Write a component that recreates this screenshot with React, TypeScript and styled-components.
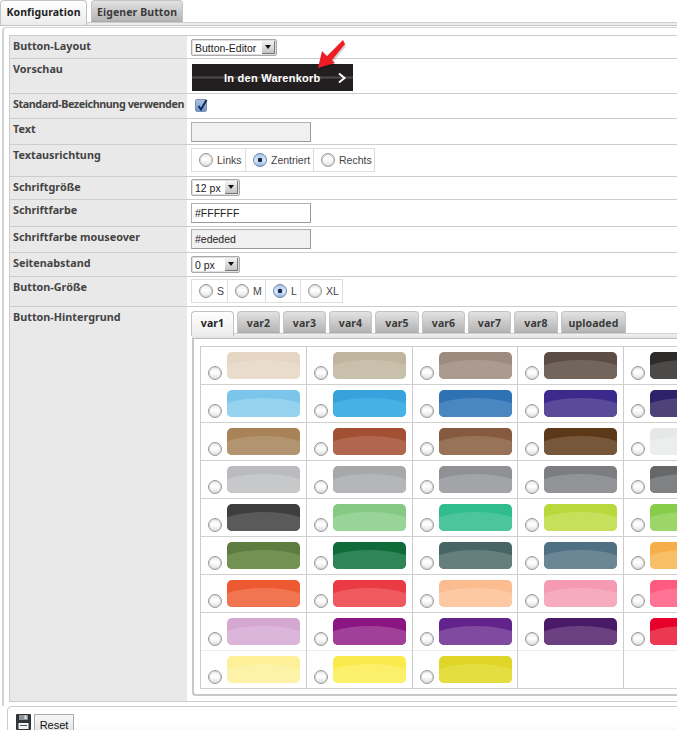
import styled, { createGlobalStyle } from 'styled-components';

const GlobalStyle = createGlobalStyle`
    html, body {
        margin: 0;
        padding: 0;
        background: #fff;
    }
    body {
        font-family: "Liberation Sans", Arial, sans-serif;
        font-size: 11px;
        color: #222;
    }
`;

const Page = styled.div`
    position: relative;
    width: 677px;
    height: 730px;
    overflow: hidden;
`;

const TabBar = styled.div<{ $inner?: boolean }>`
    display: flex;
    gap: ${({ $inner }) => ($inner ? '3px' : '4px')};
    height: 22px;
    position: relative;
    z-index: 1;
`;

const Tab = styled.div<{ $active?: boolean; $w: number }>`
    box-sizing: border-box;
    width: ${({ $w }) => $w}px;
    height: ${({ $active }) => ($active ? '25px' : '22px')};
    border: 1px solid #c4c4c4;
    border-bottom: ${({ $active }) => ($active ? 'none' : '1px solid #aaa')};
    border-radius: 4px 4px 0 0;
    background: ${({ $active }) =>
        $active ? 'linear-gradient(#ffffff, #ececec)' : 'linear-gradient(#e2e2e2, #b4b4b4)'};
    color: ${({ $active }) => ($active ? '#222' : '#3a3a3a')};
    font-family: "Noto Sans", sans-serif;
    font-weight: bold;
    font-size: 10.5px;
    letter-spacing: 0.1px;
    line-height: 22px;
    text-align: center;
`;

const TabRule = styled.div`
    height: 2px;
    background: #ececec;
    border-top: 1px solid #cfcfcf;
    border-bottom: 1px solid #c4c4c4;
`;

const Panel = styled.div`
    margin: 1px 0 0 2px;
    padding: 7px 0 4px 5px;
    width: 800px;
    border-left: 2px solid #d4d4d4;
    border-top: 1px solid #d4d4d4;
    border-top-left-radius: 4px;
`;

const FormTable = styled.div`
    border-top: 1px solid #ccc;
    border-left: 1px solid #ccc;
`;

const Row = styled.div<{ $h: number }>`
    box-sizing: border-box;
    display: grid;
    grid-template-columns: 178px 1fr;
    height: ${({ $h }) => $h}px;
    border-bottom: 1px solid #ccc;
`;

const Label = styled.div<{ $tight?: boolean }>`
    background: #e9e9e9;
    border-right: 1px solid #fff;
    padding: 3px 0 0 3px;
    color: #444;
    font-family: "Noto Sans", sans-serif;
    font-weight: bold;
    font-size: 10.8px;
    letter-spacing: ${({ $tight }) => ($tight ? '-0.45px' : '0')};
    line-height: 14px;
    white-space: nowrap;
`;

const Value = styled.div<{ $top: number }>`
    padding: ${({ $top }) => $top}px 0 0 3px;
    position: relative;
`;

const SelectBox = styled.div<{ $w: number }>`
    box-sizing: border-box;
    display: flex;
    align-items: center;
    justify-content: space-between;
    width: ${({ $w }) => $w}px;
    height: 17px;
    padding: 0 1px 0 3px;
    background: #fff;
    border: 1px solid #a8a8a8;
    box-shadow: inset 0 0 0 1px #e0e0e0;
    border-radius: 2px;
    font-size: 10.5px;
    color: #222;
`;

const SelectCaret = styled.span`
    display: flex;
    align-items: center;
    justify-content: center;
    width: 13px;
    height: 13px;
    background: linear-gradient(#f4f4f4, #c4c4c4);
    border-right: 1px solid #777;
    border-bottom: 1px solid #777;
    box-sizing: border-box;

    &::before {
        content: '';
        border-left: 3px solid transparent;
        border-right: 3px solid transparent;
        border-top: 4px solid #111;
    }
`;

const TextField = styled.div<{ $disabled?: boolean }>`
    box-sizing: border-box;
    width: 120px;
    height: 20px;
    padding-left: 3px;
    background: ${({ $disabled }) => ($disabled ? '#f0f0f0' : '#fff')};
    border: 1px solid #b0b0b0;
    border-bottom-color: #999;
    border-right-color: #999;
    font-size: 10.5px;
    line-height: 18px;
    color: #222;
`;

const PreviewButton = styled.div`
    box-sizing: border-box;
    display: flex;
    align-items: center;
    width: 161px;
    height: 27px;
    margin-left: 1px;
    padding-left: 32px;
    background:
        linear-gradient(transparent 12px, rgba(255, 255, 255, 0.2) 13px, rgba(255, 255, 255, 0.2) 14px, transparent 15px),
        #231f20;
    color: #fff;
    font-weight: bold;
    font-size: 11px;
    letter-spacing: 0.25px;
`;

const PreviewChevron = styled.svg`
    margin-left: 16px;
`;

const MarkerArrow = styled.svg`
    position: absolute;
    left: 125px;
    top: -20px;
    z-index: 2;
`;

const Checkbox = styled.span`
    display: block;
    box-sizing: border-box;
    position: relative;
    width: 12px;
    height: 13px;
    margin: 0 0 0 4px;
    border: 1px solid #7f8fb0;
    border-radius: 2px;
    background: linear-gradient(#a9c2e6, #6f97cf);
`;

const CheckMark = styled.svg`
    position: absolute;
    left: -1px;
    top: -3px;
`;

const RadioGroup = styled.div`
    display: inline-flex;
    height: 24px;
    box-sizing: border-box;
    border: 1px solid #ddd;
`;

const RadioCell = styled.label<{ $w: number }>`
    box-sizing: border-box;
    display: flex;
    align-items: center;
    width: ${({ $w }) => $w}px;
    padding-left: 7px;
    gap: 4px;
    border-right: 1px solid #ddd;
    color: #444;
    font-size: 10.5px;

    &:last-child {
        border-right: none;
    }
`;

const Radio = styled.input.attrs({ type: 'radio', readOnly: true })`
    appearance: none;
    box-sizing: border-box;
    display: block;
    flex: none;
    width: 14px;
    height: 14px;
    margin: 0;
    border: 1px solid #999;
    border-radius: 50%;
    background: linear-gradient(#eeeeee, #ffffff 45%, #e2e2e2);
    box-shadow: inset 0 0 0 1px #d8d8d8;

    &:checked {
        border-color: #6d86ad;
        box-shadow: none;
        background: radial-gradient(circle, #1b2a44 0 2px, transparent 2.6px), linear-gradient(#a8c4e8, #dcebfb 55%, #8db2e2);
    }
`;

const InnerPanel = styled.div`
    margin: 0 0 0 1px;
    padding: 7px 0 7px 6px;
    height: 357px;
    box-sizing: border-box;
    border-left: 2px solid #c8c8c8;
    border-bottom: 2px solid #c8c8c8;
    border-bottom-left-radius: 4px;
`;

const InnerRule = styled.div`
    margin-left: 1px;
    height: 4px;
    background: linear-gradient(#f0f0f0, #e2e2e2);
    border-top: 1px solid #d0d0d0;
    border-bottom: 1px solid #bdbdbd;
`;

const SwatchGrid = styled.div`
    display: grid;
    grid-template-columns: repeat(6, 105.75px);
    grid-auto-rows: 38px;
    border-top: 1px solid #ccc;
    border-left: 1px solid #ccc;
`;

const SwatchCell = styled.div<{ $soft?: boolean }>`
    box-sizing: border-box;
    display: flex;
    align-items: flex-start;
    gap: 5px;
    padding: 5px 0 0 7px;
    border-right: 1px solid #ccc;
    border-bottom: 1px solid ${({ $soft }) => ($soft ? '#ececec' : '#cfcfcf')};
`;

const SwatchRadio = styled(Radio)`
    margin-top: 14px;
`;

const Swatch = styled.div<{ $top: string; $bottom: string }>`
    position: relative;
    flex: none;
    width: 73px;
    height: 27px;
    border-radius: 5px;
    overflow: hidden;
    background: ${({ $top }) => $top};

    &::after {
        content: '';
        position: absolute;
        left: -14px;
        top: 8px;
        width: 101px;
        height: 34px;
        border-radius: 50%;
        background: ${({ $bottom }) => $bottom};
    }
`;

const Footer = styled.div`
    display: flex;
    gap: 3px;
    margin: 0 0 0 7px;
    padding: 7px 0 0 8px;
    height: 40px;
    box-sizing: border-box;
    border-left: 1px solid #ccc;
    border-top: 1px solid #ccc;
    border-top-left-radius: 5px;
    background: linear-gradient(#fff 18px, #f0f0f0 30px);
`;

const ResetButton = styled.div`
    box-sizing: border-box;
    width: 40px;
    height: 26px;
    padding-top: 4px;
    border: 1px solid #aaa;
    background: linear-gradient(#f6f6f6, #ddd);
    color: #111;
    font-size: 11px;
    text-align: center;
`;

const FloppyIcon = () => (
    <svg width="15" height="16" viewBox="0 0 15 16">
        <path d="M1 0h13a1 1 0 0 1 1 1v14a1 1 0 0 1-1 1H1a1 1 0 0 1-1-1V1a1 1 0 0 1 1-1z" fill="#2f3438" />
        <rect x="3" y="1" width="9" height="5" fill="#8d9499" />
        <rect x="8.5" y="1.5" width="2" height="3.5" fill="#e8e8e8" />
        <rect x="2.5" y="9" width="10" height="6" fill="#f1f1f1" />
        <rect x="4" y="11" width="7" height="1" fill="#555" />
    </svg>
);

const swatches: [string, string][][] = [
    [['#e4d6c3', '#e9dccd'], ['#c0b59e', '#c9c0ab'], ['#9d8b80', '#aa9a90'], ['#5c4d44', '#72655c'], ['#2f2b2b', '#4c4948']],
    [['#7cc5ea', '#94d2f0'], ['#36a3dd', '#46b1e4'], ['#2e72b4', '#4a86c0'], ['#3b2a8c', '#5a4a9a'], ['#2d2169', '#4f4278']],
    [['#a88358', '#b39470'], ['#a34f33', '#b0674e'], ['#855a3e', '#987358'], ['#5b3918', '#77573a'], ['#e6e7e8', '#eceded']],
    [['#b9bbbe', '#c6c8ca'], ['#a7a8aa', '#b5b6b9'], ['#909195', '#a3a4a7'], ['#7c7d80', '#929396'], ['#666768', '#808182']],
    [['#3e3e3e', '#5a5a5a'], ['#85c985', '#98d498'], ['#2fbd8d', '#4cc49c'], ['#b8d83c', '#c6e05c'], ['#88cc4c', '#9cd668']],
    [['#5c7d3f', '#749154'], ['#0f6b3a', '#2f8458'], ['#486464', '#647f7c'], ['#4f6f82', '#6c8695'], ['#f6ae4a', '#f7bf68']],
    [['#ed5a32', '#f07550'], ['#ea3a44', '#ef5a60'], ['#fbbd90', '#fcc9a4'], ['#f59ab2', '#f6abbf'], ['#ff5a80', '#ff7395']],
    [['#d5a8d2', '#dcb6da'], ['#8c1584', '#a04099'], ['#62248a', '#7f4a9f'], ['#4a1a68', '#6a4080'], ['#e8002c', '#ec3850']],
    [['#fdf096', '#fcf3a8'], ['#faea4c', '#fcf06a'], ['#e0d628', '#e5de40']],
];

const innerTabs: [string, number][] = [
    ['var1', 43], ['var2', 43], ['var3', 43], ['var4', 43], ['var5', 44],
    ['var6', 43], ['var7', 43], ['var8', 44], ['uploaded', 65],
];

const alignOptions: [string, number, boolean][] = [
    ['Links', 54, false],
    ['Zentriert', 68, true],
    ['Rechts', 60, false],
];

const sizeOptions: [string, number, boolean][] = [
    ['S', 36, false],
    ['M', 38, false],
    ['L', 35, true],
    ['XL', 41, false],
];

const App = () => {
    return (
        <Page>
            <GlobalStyle />
            <TabBar>
                <Tab $active $w={87}>Konfiguration</Tab>
                <Tab $w={92}>Eigener Button</Tab>
            </TabBar>
            <TabRule />
            <Panel>
                <FormTable>
                    <Row $h={23}>
                        <Label>Button-Layout</Label>
                        <Value $top={3}>
                            <SelectBox $w={86}>Button-Editor<SelectCaret /></SelectBox>
                        </Value>
                    </Row>
                    <Row $h={35}>
                        <Label>Vorschau</Label>
                        <Value $top={5}>
                            <PreviewButton>
                                In den Warenkorb
                                <PreviewChevron width="10" height="12" viewBox="0 0 10 12">
                                    <path d="M2 1.5 7.5 6 2 10.5" fill="none" stroke="#fff" strokeWidth="2" />
                                </PreviewChevron>
                            </PreviewButton>
                            <MarkerArrow width="36" height="36" viewBox="0 0 36 36">
                                <path d="M5 29 9 12 14 17 30 1 32 5 19 21 22 24z" fill="#000" opacity="0.18" transform="translate(1 2)" />
                                <path d="M5 29 9 12 14 17 30 1 32 5 19 21 22 24z" fill="#ee1c25" />
                            </MarkerArrow>
                        </Value>
                    </Row>
                    <Row $h={25}>
                        <Label $tight>Standard-Bezeichnung verwenden</Label>
                        <Value $top={5}>
                            <Checkbox>
                                <CheckMark width="14" height="16" viewBox="0 0 14 16">
                                    <path d="M3.5 9 6 12.5 11.5 3" fill="none" stroke="#15294f" strokeWidth="2" />
                                </CheckMark>
                            </Checkbox>
                        </Value>
                    </Row>
                    <Row $h={26}>
                        <Label>Text</Label>
                        <Value $top={3}>
                            <TextField $disabled />
                        </Value>
                    </Row>
                    <Row $h={32}>
                        <Label>Textausrichtung</Label>
                        <Value $top={3}>
                            <RadioGroup>
                                {alignOptions.map(([text, w, on]) => (
                                    <RadioCell key={text} $w={w}>
                                        <Radio checked={on} />
                                        {text}
                                    </RadioCell>
                                ))}
                            </RadioGroup>
                        </Value>
                    </Row>
                    <Row $h={23}>
                        <Label>Schriftgröße</Label>
                        <Value $top={2}>
                            <SelectBox $w={49}>12 px<SelectCaret /></SelectBox>
                        </Value>
                    </Row>
                    <Row $h={27}>
                        <Label>Schriftfarbe</Label>
                        <Value $top={3}>
                            <TextField>#FFFFFF</TextField>
                        </Value>
                    </Row>
                    <Row $h={26}>
                        <Label>Schriftfarbe mouseover</Label>
                        <Value $top={2}>
                            <TextField $disabled>#ededed</TextField>
                        </Value>
                    </Row>
                    <Row $h={24}>
                        <Label>Seitenabstand</Label>
                        <Value $top={3}>
                            <SelectBox $w={49}>0 px<SelectCaret /></SelectBox>
                        </Value>
                    </Row>
                    <Row $h={30}>
                        <Label>Button-Größe</Label>
                        <Value $top={2}>
                            <RadioGroup>
                                {sizeOptions.map(([text, w, on]) => (
                                    <RadioCell key={text} $w={w}>
                                        <Radio checked={on} />
                                        {text}
                                    </RadioCell>
                                ))}
                            </RadioGroup>
                        </Value>
                    </Row>
                    <Row $h={395}>
                        <Label>Button-Hintergrund</Label>
                        <Value $top={4}>
                            <TabBar $inner>
                                {innerTabs.map(([text, w], i) => (
                                    <Tab key={text} $w={w} $active={i === 0}>{text}</Tab>
                                ))}
                            </TabBar>
                            <InnerRule />
                            <InnerPanel>
                                <SwatchGrid>
                                    {swatches.map((row, r) =>
                                        [0, 1, 2, 3, 4, 5].map((c) => (
                                            <SwatchCell key={`${r}-${c}`} $soft={r === 7}>
                                                {row[c] && (
                                                    <>
                                                        <SwatchRadio />
                                                        <Swatch $top={row[c][0]} $bottom={row[c][1]} />
                                                    </>
                                                )}
                                            </SwatchCell>
                                        ))
                                    )}
                                </SwatchGrid>
                            </InnerPanel>
                        </Value>
                    </Row>
                </FormTable>
            </Panel>
            <Footer>
                <FloppyIcon />
                <ResetButton>Reset</ResetButton>
            </Footer>
        </Page>
    );
};

export default App;
